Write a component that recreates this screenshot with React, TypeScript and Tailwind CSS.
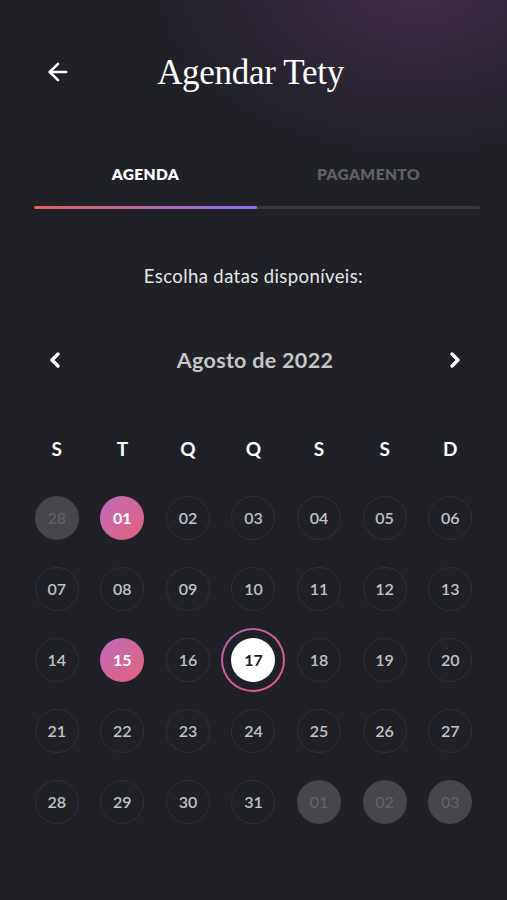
import { ArrowLeft, ChevronLeft, ChevronRight } from "lucide-react";

type Day = { label: string; kind: "muted" | "normal" | "picked" | "today" };

const weekdays = ["S", "T", "Q", "Q", "S", "S", "D"];

const days: Day[] = [
  { label: "28", kind: "muted" },
  ...Array.from({ length: 31 }, (_, i): Day => {
    const n = i + 1;
    const label = String(n).padStart(2, "0");
    if (n === 1 || n === 15) return { label, kind: "picked" };
    if (n === 17) return { label, kind: "today" };
    return { label, kind: "normal" };
  }),
  { label: "01", kind: "muted" },
  { label: "02", kind: "muted" },
  { label: "03", kind: "muted" },
];

function DayCell({ day }: { day: Day }) {
  if (day.kind === "today") {
    return (
      <div className="h-[44px] flex items-center justify-center">
        <div className="w-[64px] h-[64px] shrink-0 rounded-full p-[2px] bg-[linear-gradient(135deg,#b861b8,#e5606e)]">
          <div className="w-full h-full rounded-full bg-[#1f2127] flex items-center justify-center">
            <div className="w-[44px] h-[44px] rounded-full bg-white flex items-center justify-center text-[16px] font-bold text-[#1f2127]">
              {day.label}
            </div>
          </div>
        </div>
      </div>
    );
  }
  const base = "w-[44px] h-[44px] rounded-full flex items-center justify-center text-[16px]";
  if (day.kind === "picked") {
    return (
      <div className="flex justify-center">
        <div className={`${base} font-bold text-white bg-[linear-gradient(135deg,#bf6bbd,#e2627a)]`}>{day.label}</div>
      </div>
    );
  }
  if (day.kind === "muted") {
    return (
      <div className="flex justify-center">
        <div className={`${base} font-semibold text-[#606166] bg-[#46474b]`}>{day.label}</div>
      </div>
    );
  }
  return (
    <div className="flex justify-center">
      <div className={`${base} font-semibold text-[#c2c2c4] border-[1.5px] border-[#303238]`}>{day.label}</div>
    </div>
  );
}

export default function App() {
  return (
    <div className="relative w-full h-[900px] overflow-hidden bg-[#1f2127] font-['Lato',sans-serif]">
      <div className="absolute -top-[200px] -right-[180px] w-[540px] h-[360px] rounded-full bg-[radial-gradient(closest-side,rgba(100,55,105,0.5),rgba(31,33,39,0))]" />

      <div className="relative">
        <div className="mt-[50px] h-[44px] px-[44px] flex items-center">
          <ArrowLeft className="w-[28px] h-[28px] text-white" strokeWidth={2.2} />
          <h1 className="flex-1 text-center text-white text-[35px] leading-none font-['Liberation_Serif',serif] tracking-[-0.3px] mr-[6px]">
            Agendar Tety
          </h1>
          <div className="w-[28px]" />
        </div>

        <div className="ml-[34px] mr-[27px] mt-[70px]">
          <div className="flex">
            <div className="flex-1 text-center text-[15.5px] font-extrabold tracking-[0.4px] text-white leading-5">AGENDA</div>
            <div className="flex-1 text-center text-[15.5px] font-extrabold tracking-[0.4px] text-[#5f6065] leading-5">PAGAMENTO</div>
          </div>
          <div className="mt-[22px] flex h-[3px] rounded-full bg-[#36383e] overflow-hidden">
            <div className="w-1/2 h-full rounded-full bg-[linear-gradient(90deg,#e0615a,#8a6cf2)]" />
          </div>
        </div>

        <p className="mt-[55px] text-center text-[18.5px] leading-6 tracking-[0.4px] text-[#e6e6e6]">Escolha datas disponíveis:</p>

        <div className="mt-[58px] pl-[43px] pr-[40px] flex items-center justify-between">
          <ChevronLeft className="w-[24px] h-[24px] text-white" strokeWidth={3.4} />
          <span className="text-[21.5px] font-bold text-[#c6c6c8] leading-7 tracking-[0.3px]">Agosto de 2022</span>
          <ChevronRight className="w-[24px] h-[24px] text-white" strokeWidth={3.4} />
        </div>

        <div className="mt-[63px] px-[24px] grid grid-cols-7 gap-y-[27px]">
          {weekdays.map((w, i) => (
            <div key={i} className="text-center text-[19px] font-bold text-white leading-6 mb-[8px]">
              {w}
            </div>
          ))}
          {days.map((d, i) => (
            <DayCell key={i} day={d} />
          ))}
        </div>
      </div>
    </div>
  );
}
